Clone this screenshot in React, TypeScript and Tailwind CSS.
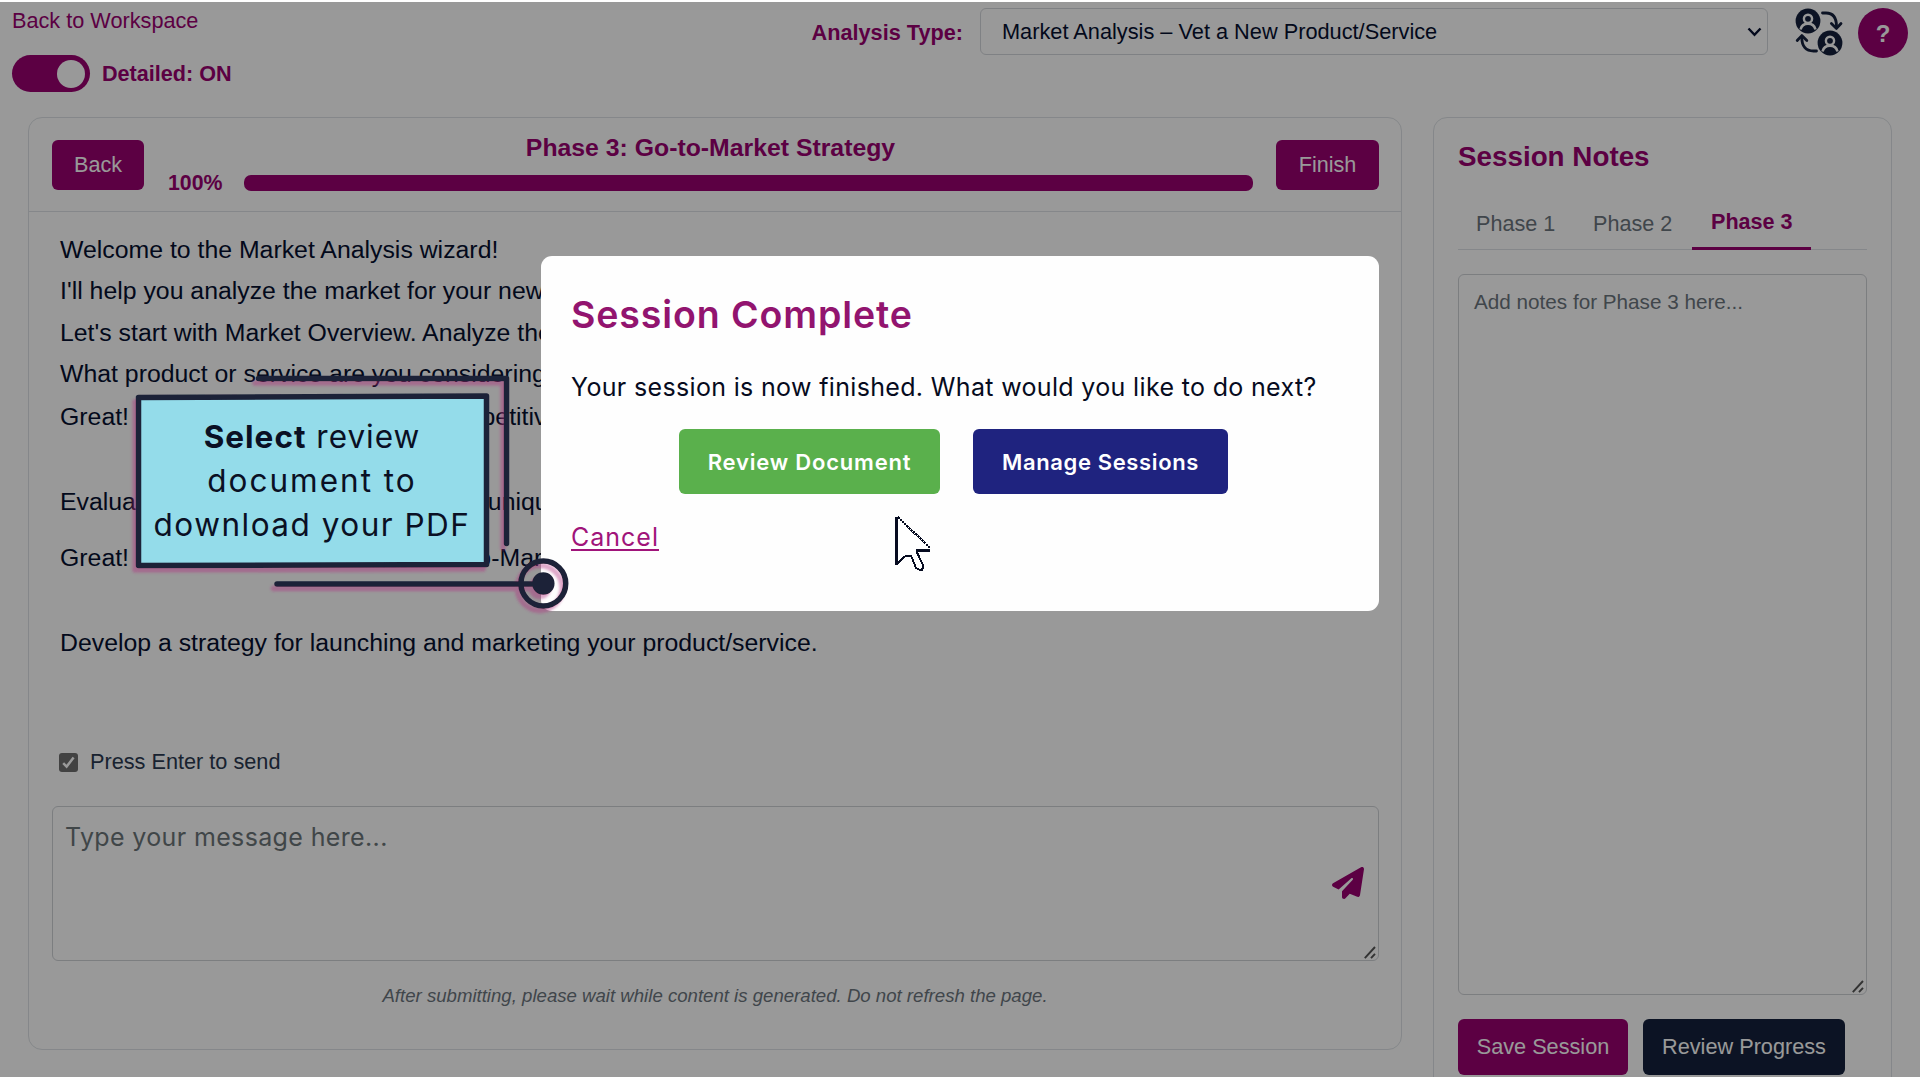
import type { ReactNode } from "react";
import { FaPaperPlane } from "react-icons/fa6";

function UsersSwapIcon() {
  return (
    <svg className="h-[48px] w-[48px] shrink-0" viewBox="0 0 48 48" fill="none">
      <SwapAvatar x={13} y={13} />
      <SwapAvatar x={35} y={35} />
      <g stroke="#14213d" strokeWidth="2.8" strokeLinecap="round" strokeLinejoin="round">
        <path d="M27.5 5 H31 C37.5 5 41.5 9.5 41.5 18.5" />
        <path d="M36.4 15.5 L41.5 20.4 L46 15.5" />
        <path d="M21.5 43 H18.5 C11 43 6.8 38.5 6.8 29.5" />
        <path d="M2.2 32.5 L6.8 27.6 L11.8 32.5" />
      </g>
    </svg>
  );
}

function SwapAvatar({ x, y }: { x: number; y: number }) {
  return (
    <g transform={`translate(${x} ${y})`}>
      <circle r="12.4" fill="#14213d" />
      <path d="M-7.5 8.5 C-6.5 4.5 -3.5 2.6 0 2.6 C3.5 2.6 6.5 4.5 7.5 8.5" stroke="#fff" strokeWidth="2.6" />
      <circle cy="-2.2" r="4.1" stroke="#fff" strokeWidth="2.4" fill="#14213d" />
    </g>
  );
}

function ResizeHandle() {
  return (
    <svg className="absolute right-[2px] bottom-[1px] h-[13px] w-[12px]" viewBox="0 0 12 13">
      <path d="M0.8 12.2 L11 1 M7 12.2 L11 7.8" stroke="#555" strokeWidth="1.9" fill="none" />
    </svg>
  );
}

function Header() {
  return (
    <header className="flex h-[115px] items-start justify-between pr-3 pl-3 text-[21.7px] text-[#990070]">
      <div className="pt-1">
        <div className="leading-[30px]">Back to Workspace</div>
        <div className="mt-[19px] flex items-center">
          <div className="flex h-[37px] w-[78px] items-center justify-end rounded-full bg-[#990070] pr-[5px]">
            <div className="h-[28px] w-[28px] rounded-full bg-white" />
          </div>
          <span className="ml-3 pt-[2px] text-[21.6px] font-bold">Detailed: ON</span>
        </div>
      </div>
      <div className="flex items-start pt-[6px]">
        <span className="mr-[17px] leading-[50px] font-bold">Analysis Type:</span>
        <div className="flex h-[47px] w-[788px] items-center justify-between rounded-md border border-[#d4d8dc] pr-[5px] pl-[21px] text-[21.75px] text-[#060f30]">
          <span className="pt-[2px]">Market Analysis – Vet a New Product/Service</span>
          <svg className="h-[10px] w-[15px]" viewBox="0 0 15 10" fill="none">
            <path d="M1.5 1.5 L7.5 7.8 L13.5 1.5" stroke="#060f30" strokeWidth="2.4" />
          </svg>
        </div>
        <div className="mr-[15px] ml-[27px]">
          <UsersSwapIcon />
        </div>
        <div className="flex h-[50px] w-[50px] items-center justify-center rounded-full bg-[#990070] pt-px text-[24px] font-bold text-white">?</div>
      </div>
    </header>
  );
}

function ChatCard() {
  return (
    <section className="flex h-[933px] w-[1374px] shrink-0 flex-col rounded-[14px] border border-[#dee2e6]">
      <div className="flex h-[94px] shrink-0 items-start border-b border-[#dee2e6] pr-[22px] pl-[23px] text-[21.6px]">
        <div className="mt-[22px] flex h-[50px] w-[92px] items-center justify-center rounded-md bg-[#990070] text-white">Back</div>
        <div className="mt-[15px] ml-6 flex-1 font-bold text-[#990070]">
          <div className="text-center text-[24.8px] leading-[30px]">Phase 3: Go-to-Market Strategy</div>
          <div className="mt-[5px] flex h-[30px] items-center">
            <span className="mr-[22px] pt-px text-[21.3px]">100%</span>
            <div className="h-4 flex-1 rounded-[7px] bg-[#990070]" />
          </div>
        </div>
        <div className="mt-[22px] ml-[23px] flex h-[50px] w-[103px] items-center justify-center rounded-md bg-[#990070] text-white">Finish</div>
      </div>

      <div className="h-[535px] shrink-0 pt-[17px] pl-[31px] text-[24.84px] leading-[41.4px] text-[#060f30]">
        <p>Welcome to the Market Analysis wizard!</p>
        <p>I'll help you analyze the market for your new</p>
        <p>Let's start with Market Overview. Analyze the</p>
        <p>What product or service are you considering</p>
        <p className="mt-[1.5px]">Great! Let's move on to Phase 2: Competitive</p>
        <p className="mt-[43.5px]">Evaluate competitors and identify your unique</p>
        <p className="mt-[14.6px]">Great! Let's move on to Phase 3: Go-to-Market</p>
        <p className="mt-[43.3px]">Develop a strategy for launching and marketing your product/service.</p>
      </div>

      <div className="flex h-[30px] items-center pl-[30px] text-[21.7px] text-[#2b3950]">
        <div className="mr-[12px] flex h-[19px] w-[19px] items-center justify-center rounded-[3px] bg-[#6e6e6e]">
          <svg className="h-[15px] w-[15px]" viewBox="0 0 15 15" fill="none">
            <path d="M2.2 8.2 L5.6 11.6 L12.6 2.6" stroke="#fff" strokeWidth="2.5" />
          </svg>
        </div>
        <span className="pt-px">Press Enter to send</span>
      </div>

      <div className="relative mt-[29px] ml-[23px] h-[155px] w-[1327px] rounded-md border border-[#cfd2d6] pt-[14px] pl-[12px] font-['Inter'] text-[25px] leading-[32px] tracking-[0.36px] text-[#6c7579]">
        Type your message here...
        <FaPaperPlane className="absolute top-[60px] right-[14px] h-[32px] w-[32px] text-[#990070]" />
        <ResizeHandle />
      </div>
      <p className="mt-5 text-center text-[18.63px] leading-[30px] text-[#6c757d] italic">
        After submitting, please wait while content is generated. Do not refresh the page.
      </p>
    </section>
  );
}

function NotesCard() {
  return (
    <aside className="ml-[31px] h-[1000px] w-[459px] shrink-0 rounded-[14px] border border-[#dee2e6] px-6 pt-[21px] text-[21.6px]">
      <h2 className="text-[27.8px] leading-[36px] font-bold text-[#990070]">Session Notes</h2>
      <div className="mt-[15px] flex h-[60px] border-b border-[#dee2e6] text-[#6c757d]">
        <div className="w-[116px] pt-[19px] pl-[18px] leading-[30px]">Phase 1</div>
        <div className="w-[118px] pt-[19px] pl-[19px] leading-[30px]">Phase 2</div>
        <div className="h-[60px] w-[119px] border-b-[3px] border-[#990070] pt-[17px] pl-[19px] leading-[30px] font-bold text-[#990070]">Phase 3</div>
      </div>
      <div className="relative mt-6 h-[721px] rounded-md border border-[#cfd2d6] pt-3 pl-[15px] text-[20.7px] leading-[30px] text-[#6c757d]">
        Add notes for Phase 3 here...
        <ResizeHandle />
      </div>
      <div className="mt-[24px] flex gap-[15px] text-[21.7px] text-white">
        <div className="flex h-[56px] w-[170px] items-center justify-center rounded-md bg-[#990070]">Save Session</div>
        <div className="flex h-[56px] w-[202px] items-center justify-center rounded-md bg-[#14213d]">Review Progress</div>
      </div>
    </aside>
  );
}

function ModalButton({ className, children }: { className: string; children: ReactNode }) {
  return (
    <button className={`flex h-[65px] items-center justify-center rounded-md pt-px text-[22px] font-semibold text-white ${className}`}>
      {children}
    </button>
  );
}

function SessionModal() {
  return (
    <div className="absolute top-[254px] left-[541px] h-[355px] w-[838px] rounded-[11px] bg-[#fefefe] pt-[31px] pl-[30px] font-['Inter'] text-[25px]">
      <h1 className="text-[37.5px] leading-[56px] font-semibold tracking-[0.9px] text-[#92146f]">Session Complete</h1>
      <p className="mt-6 leading-10 tracking-[0.34px] text-[#060b20]">Your session is now finished. What would you like to do next?</p>
      <div className="mt-[22px] ml-[108px] flex gap-[33px]">
        <ModalButton className="w-[261px] bg-[#5ab04c] tracking-[0.8px]">Review Document</ModalButton>
        <ModalButton className="w-[255px] bg-[#1f237f] tracking-[0.63px]">Manage Sessions</ModalButton>
      </div>
      <div className="mt-[23px] leading-10">
        <span className="tracking-[1px] text-[#a0147a] underline decoration-2 underline-offset-[3px]">Cancel</span>
      </div>
    </div>
  );
}

function Callout() {
  return (
    <div className="absolute top-[368px] left-[125px] h-[250px] w-[460px]">
      <svg className="absolute inset-0 h-full w-full" viewBox="125 370 460 250" fill="none">
        <defs>
          <filter id="pinkShadow" x="-10%" y="-10%" width="120%" height="120%">
            <feDropShadow dx="-3.5" dy="4.5" stdDeviation="1.3" floodColor="#b0307f" floodOpacity="0.42" />
          </filter>
        </defs>
        <g filter="url(#pinkShadow)" stroke="#1d2238" strokeWidth="5.5" strokeLinecap="round" strokeLinejoin="round">
          <path d="M258.5 378.5 H506.5 V543.5" />
          <path d="M138.5 397.5 L486.5 396 V564.5 L138.5 565.5 Z" fill="#94dcea" />
          <path d="M277 584 H532" />
          <circle cx="543.3" cy="583.5" r="22.4" />
          <circle cx="543.3" cy="583.5" r="8.5" fill="#1d2238" />
        </g>
      </svg>
      <div className="absolute top-[45px] left-[14px] w-[346px] text-center font-['Inter'] text-[31.5px] leading-[44px] text-[#0a1024]">
        <div className="tracking-[1px]">
          <b>Select</b> review
        </div>
        <div className="tracking-[2px]">document to</div>
        <div className="tracking-[1.5px] whitespace-nowrap">download your PDF</div>
      </div>
    </div>
  );
}

function Cursor() {
  return (
    <svg className="absolute top-[513px] left-[893px] h-[60px] w-[42px]" viewBox="893 515 42 60" shapeRendering="crispEdges">
      <path d="M896.5 517 V565 L906 556 H911 L916 568 L919 570 H922 L924 567 L916.5 551 H930 V548 L899 517 Z" fill="#fff" />
      <g fill="none" stroke="#060b20">
        <path d="M896.5 517 V565 M916 550.5 H930" strokeWidth="2.4" />
        <path d="M898 517 L930.5 548.5" strokeWidth="2.2" strokeDasharray="2.2 0.8" />
        <path d="M897 564 L906 555.5 H911 L916 568 L919 569.5 H922 L923.5 566 L916.5 551.5" strokeWidth="2" />
      </g>
    </svg>
  );
}

export default function App() {
  return (
    <div className="h-[1080px] w-[1920px] overflow-hidden bg-white pt-[2px] font-['Liberation_Sans',Arial,sans-serif]">
      <div className="relative h-[1075px] overflow-hidden bg-white">
        <Header />
        <main className="flex pl-7">
          <ChatCard />
          <NotesCard />
        </main>
        <div className="absolute inset-0 bg-black/40" />
        <SessionModal />
        <Callout />
        <Cursor />
      </div>
    </div>
  );
}
